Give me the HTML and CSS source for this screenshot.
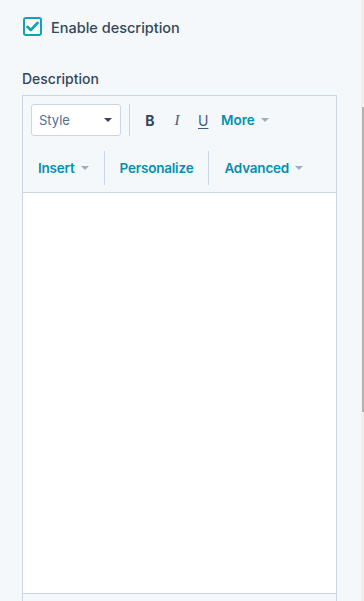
FILE: index.html
```html
<!DOCTYPE html>
<html lang="en">
<head>
    <meta charset="UTF-8">
    <meta name="viewport" content="width=device-width, initial-scale=1.0">
    <title>Description settings</title>
    <link rel="stylesheet" href="styles.css">
</head>
<body>
    <div class="page">
        <div class="panel">
            <label class="check-row">
                <span class="checkbox">
                    <svg width="13" height="11" viewBox="0 0 13 11"><path d="M1.5 5.8 L4.8 9 L11.5 2" fill="none" stroke="#0fa3b8" stroke-width="2.6" stroke-linecap="round" stroke-linejoin="round"/></svg>
                </span>
                <span class="check-label">Enable description</span>
            </label>

            <div class="field-label">Description</div>

            <div class="editor">
                <div class="toolbar">
                    <div class="tool-row first">
                        <div class="style-select">
                            <span>Style</span>
                            <span class="caret dark"></span>
                        </div>
                        <div class="divider short"></div>
                        <span class="fmt bold">B</span>
                        <span class="fmt italic">I</span>
                        <span class="fmt under">U</span>
                        <span class="menu-link">More <span class="caret"></span></span>
                    </div>
                    <div class="tool-row second">
                        <span class="menu-link pad">Insert <span class="caret"></span></span>
                        <div class="divider"></div>
                        <span class="menu-link pad">Personalize</span>
                        <div class="divider"></div>
                        <span class="menu-link pad">Advanced <span class="caret"></span></span>
                    </div>
                </div>
                <div class="editor-body"></div>
                <div class="editor-footer"></div>
            </div>
        </div>
        <div class="edge"><div class="edge-bar"></div></div>
    </div>
</body>
</html>
```

FILE: styles.css
```css
html, body {
    margin: 0;
    height: 601px;
    overflow: hidden;
}
body {
    font-family: Inter, "Noto Sans", Arial, sans-serif;
    background-color: #f5f8fa;
    color: #33475b;
}
.page {
    display: flex;
    height: 601px;
    overflow: hidden;
}
.panel {
    flex: 1;
    padding: 16px 24px 0 22px;
}
.edge {
    width: 3px;
    background-color: #f0f0f0;
    padding-top: 107px;
    display: flex;
    justify-content: center;
}
.edge-bar {
    width: 2px;
    height: 305px;
    margin-left: 1px;
    background-color: #b4b4b4;
}
.check-row {
    display: flex;
    align-items: center;
    padding-left: 1px;
}
.checkbox {
    width: 15px;
    height: 15px;
    border: 2px solid #0fa3b8;
    border-radius: 3px;
    background-color: #fff;
    display: flex;
    align-items: center;
    justify-content: center;
}
.check-label {
    margin-left: 9px;
    margin-top: 3px;
    font-size: 14.5px;
    font-weight: 500;
}
.field-label {
    margin-top: 34px;
    font-size: 14px;
    font-weight: 500;
    line-height: 18px;
}
.editor {
    margin-top: 7px;
    border: 1px solid #cbd6e2;
    border-bottom: none;
}
.toolbar {
    padding: 8px 8px 0 8px;
    height: 88px;
    border-bottom: 1px solid #cbd6e2;
}
.tool-row {
    display: flex;
    align-items: center;
}
.tool-row.first {
    height: 32px;
}
.tool-row.second {
    margin-top: 15px;
    height: 34px;
    margin-left: -8px;
}
.style-select {
    width: 73px;
    height: 30px;
    padding: 0 8px 0 7px;
    background-color: #fff;
    border: 1px solid #cbd6e2;
    border-radius: 3px;
    display: flex;
    align-items: center;
    justify-content: space-between;
    font-size: 13px;
    color: #516f90;
}
.divider {
    width: 1px;
    height: 34px;
    background-color: #cbd6e2;
}
.divider.short {
    height: 32px;
    margin-left: 8px;
    margin-right: 15px;
}
.fmt {
    font-size: 14px;
    color: #425b76;
    width: 10px;
    text-align: center;
    margin-right: 17px;
}
.fmt.bold {
    font-weight: 700;
    color: #33475b;
}
.fmt.italic {
    font-family: "Liberation Serif", serif;
    font-style: italic;
    font-size: 15px;
    margin-right: 16px;
}
.fmt.under {
    text-decoration: underline;
    text-underline-offset: 2px;
    margin-right: 13px;
}
.menu-link {
    font-size: 13.5px;
    font-weight: 600;
    color: #0091ae;
    display: flex;
    align-items: center;
}
.menu-link.pad {
    padding: 0 15px;
    letter-spacing: -0.2px;
}
.caret {
    display: inline-block;
    width: 0;
    height: 0;
    margin-left: 6px;
    border-left: 4px solid transparent;
    border-right: 4px solid transparent;
    border-top: 4px solid #99afc4;
}
.caret.dark {
    border-top-color: #33475b;
}
.editor-body {
    height: 400px;
    background-color: #fff;
    border-bottom: 1px solid #cbd6e2;
}
.editor-footer {
    height: 7px;
}
```
